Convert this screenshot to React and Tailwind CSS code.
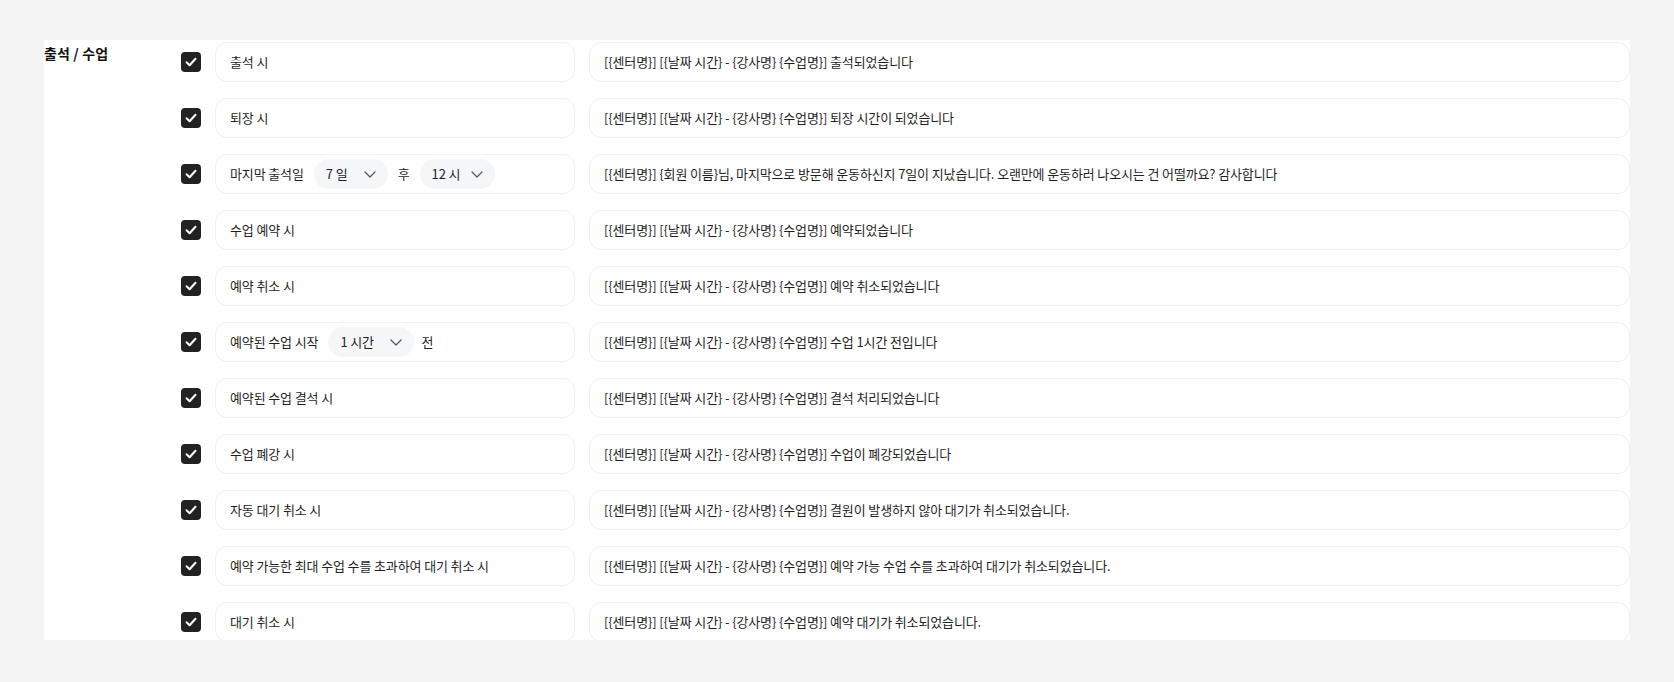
import React from 'react';

const FONT = { fontFamily: '"Noto Sans CJK KR", "Noto Sans", sans-serif' };

function Check() {
  return (
    <span className="w-5 h-5 shrink-0 rounded-[4px] bg-[#222222] flex items-center justify-center">
      <svg width="12" height="10" viewBox="0 0 12 10" fill="none">
        <path d="M1.5 5.2 4.6 8.2 10.5 1.8" stroke="#fff" strokeWidth="2" strokeLinecap="round" strokeLinejoin="round" />
      </svg>
    </span>
  );
}

function Chevron() {
  return (
    <svg width="12" height="7" viewBox="0 0 12 7" fill="none" className="shrink-0">
      <path d="M1 1l5 5 5-5" stroke="#555" strokeWidth="1.2" strokeLinecap="round" strokeLinejoin="round" />
    </svg>
  );
}

function Select({ value, width }) {
  return (
    <span className={`h-[30px] ${width} shrink-0 rounded-full bg-[#f5f6f8] pl-3 pr-3 flex items-center justify-between`}>
      <span>{value}</span>
      <Chevron />
    </span>
  );
}

const rows = [
  { label: '출석 시', msg: '[{센터명}] [{날짜 시간} - {강사명} {수업명}] 출석되었습니다' },
  { label: '퇴장 시', msg: '[{센터명}] [{날짜 시간} - {강사명} {수업명}] 퇴장 시간이 되었습니다' },
  {
    label: (
      <>
        <span>마지막 출석일</span>
        <Select value="7 일" width="w-[74px]" />
        <span>후</span>
        <Select value="12 시" width="w-[75px]" />
      </>
    ),
    msg: '[{센터명}] {회원 이름}님, 마지막으로 방문해 운동하신지 7일이 지났습니다. 오랜만에 운동하러 나오시는 건 어떨까요? 감사합니다',
  },
  { label: '수업 예약 시', msg: '[{센터명}] [{날짜 시간} - {강사명} {수업명}] 예약되었습니다' },
  { label: '예약 취소 시', msg: '[{센터명}] [{날짜 시간} - {강사명} {수업명}] 예약 취소되었습니다' },
  {
    label: (
      <>
        <span>예약된 수업 시작</span>
        <Select value="1 시간" width="w-[86px]" />
        <span className="-ml-[3px]">전</span>
      </>
    ),
    msg: '[{센터명}] [{날짜 시간} - {강사명} {수업명}] 수업 1시간 전입니다',
  },
  { label: '예약된 수업 결석 시', msg: '[{센터명}] [{날짜 시간} - {강사명} {수업명}] 결석 처리되었습니다' },
  { label: '수업 폐강 시', msg: '[{센터명}] [{날짜 시간} - {강사명} {수업명}] 수업이 폐강되었습니다' },
  { label: '자동 대기 취소 시', msg: '[{센터명}] [{날짜 시간} - {강사명} {수업명}] 결원이 발생하지 않아 대기가 취소되었습니다.' },
  {
    label: '예약 가능한 최대 수업 수를 초과하여 대기 취소 시',
    msg: '[{센터명}] [{날짜 시간} - {강사명} {수업명}] 예약 가능 수업 수를 초과하여 대기가 취소되었습니다.',
  },
  { label: '대기 취소 시', msg: '[{센터명}] [{날짜 시간} - {강사명} {수업명}] 예약 대기가 취소되었습니다.' },
];

export default function App() {
  return (
    <div className="min-h-screen bg-[#f4f4f4] pt-10 px-[44px]" style={FONT}>
      <div className="h-[600px] bg-white overflow-hidden flex">
        <div className="w-[137px] shrink-0 pt-[3px] text-[14px] leading-5 font-semibold text-[#111] tracking-[0.01em]">
          출석 / 수업
        </div>
        <div className="flex-1 flex flex-col gap-4 pt-[2px] text-[13px] tracking-[-0.01em] text-[#1f1f1f]">
          {rows.map((row, i) => (
            <div key={i} className="flex items-center gap-[14px]">
              <Check />
              <div className="w-[360px] h-10 shrink-0 rounded-xl border border-[#eef0f3] px-[14px] flex items-center gap-[10px]">
                {row.label}
              </div>
              <div className="flex-1 h-10 rounded-xl border border-[#eef0f3] px-[14px] flex items-center">
                {row.msg}
              </div>
            </div>
          ))}
        </div>
      </div>
    </div>
  );
}
